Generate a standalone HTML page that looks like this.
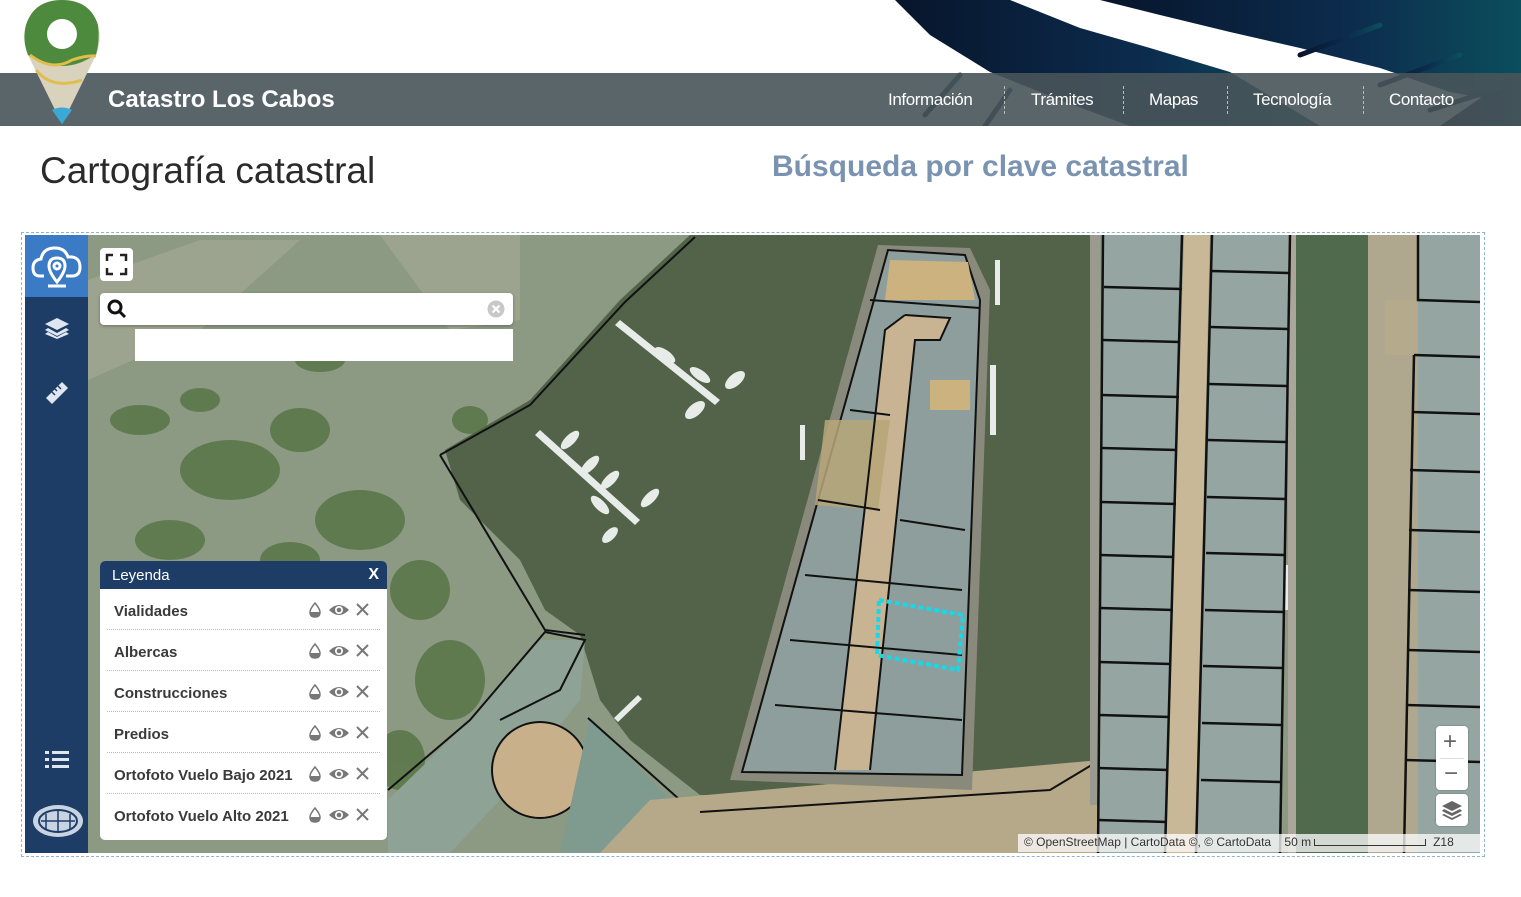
<!DOCTYPE html>
<html><head><meta charset="utf-8"><style>
*{margin:0;padding:0;box-sizing:border-box}
body{width:1521px;height:897px;background:#fff;font-family:"Liberation Sans",sans-serif;position:relative;overflow:hidden}
.abs{position:absolute}
.bar{left:0;top:73px;width:1521px;height:53px}
.brand{left:108px;top:86px;color:#fff;font-weight:bold;font-size:24px}
.nav{top:90px;color:#fff;font-size:17px;letter-spacing:-0.4px}
.sep{top:86px;height:28px;border-left:1px dashed #bbb}
h1{position:absolute;left:40px;top:150px;font-weight:normal;font-size:37px;color:#2a2a2a}
.h2{left:772px;top:150px;font-size:30px;font-weight:bold;color:#7a93b0}
.frame{left:21px;top:232px;width:1464px;height:625px;border:1px dashed #8fb4d0}
.side{left:25px;top:235px;width:63px;height:618px;background:#1e3d66}
.sidetop{left:25px;top:235px;width:63px;height:62px;background:#3b7bc6}
.btn{background:#fff;border-radius:4px}
.leg{left:100px;top:561px;width:287px;height:279px;background:#fff;border-radius:5px;overflow:hidden}
.leghd{height:28px;background:#1e3d66;color:#fff;font-size:15px;padding:6px 12px;position:relative}
.row{height:41px;margin:0 7px;border-bottom:1px dotted #bbb;position:relative;font-size:15px;font-weight:bold;color:#3a3a3a;padding:14px 7px 0}
.row:last-child{border-bottom:none}
.ic{position:absolute;top:12px;right:6px;width:66px;height:18px}
</style></head><body>
<svg class="abs" style="left:860px;top:0" width="661" height="126" viewBox="860 0 661 126">
<defs><linearGradient id="g" x1="0" x2="1"><stop offset="0" stop-color="#07152b"/><stop offset=".6" stop-color="#0c2c4e"/><stop offset="1" stop-color="#0b4e5c"/></linearGradient></defs>
<g fill="url(#g)">
<path d="M895 0 L1010 0 L1080 28 L1150 48 L1230 72 L1320 126 L1130 126 L1060 100 L990 72 L930 35 Z"/>
<path d="M1100 0 L1521 0 L1521 105 L1450 92 L1380 68 L1300 48 L1230 32 L1160 15 Z"/>
<path d="M1440 126 L1521 70 L1521 126Z"/>
</g>
<g stroke="url(#g)" stroke-width="5" stroke-linecap="round">
<line x1="960" y1="75" x2="925" y2="115"/><line x1="1010" y1="90" x2="985" y2="126"/><line x1="1380" y1="85" x2="1460" y2="55"/><line x1="1300" y1="55" x2="1380" y2="25"/><line x1="1430" y1="110" x2="1500" y2="88"/>
</g></svg>
<div class="abs bar" style="background:rgba(72,84,90,0.9)"></div>
<svg class="abs" style="left:22px;top:0" width="80" height="126" viewBox="0 0 80 126">
<path d="M40 124 L6 55 Q0 40 4 25 Q12 0 40 0 Q68 0 76 25 Q80 40 74 55 Z" fill="#d9d3bd"/>
<path d="M4 25 Q12 0 40 0 Q68 0 76 25 Q78 40 74 55 L60 62 Q40 70 20 62 L6 55 Q0 40 4 25Z" fill="#4e8a3e"/>
<path d="M8 55 Q30 72 50 60 Q65 55 74 56" stroke="#e1bd4a" stroke-width="3" fill="none"/>
<path d="M14 70 Q30 90 60 80" stroke="#e1bd4a" stroke-width="3" fill="none"/>
<path d="M30 110 L40 124 L50 110 Q40 105 30 110Z" fill="#3aa9d6"/>
<circle cx="40" cy="34" r="15" fill="#fff"/>
</svg>
<div class="abs brand">Catastro Los Cabos</div>
<div class="abs nav" style="left:888px">Información</div>
<div class="abs sep" style="left:1004px"></div>
<div class="abs nav" style="left:1031px">Trámites</div>
<div class="abs sep" style="left:1123px"></div>
<div class="abs nav" style="left:1149px">Mapas</div>
<div class="abs sep" style="left:1227px"></div>
<div class="abs nav" style="left:1253px">Tecnología</div>
<div class="abs sep" style="left:1363px"></div>
<div class="abs nav" style="left:1389px">Contacto</div>
<h1>Cartografía catastral</h1>
<div class="abs h2">Búsqueda por clave catastral</div>
<div class="abs frame"></div>
<svg class="abs" style="left:88px;top:235px" width="1392" height="618" viewBox="88 235 1392 618">
<rect x="88" y="235" width="1392" height="618" fill="#8c9a84"/>
<g fill="#a6ab96" opacity=".6"><path d="M88 280 L200 240 L300 240 L200 330 L88 380Z"/><path d="M380 235 L520 235 L520 320 L450 330Z"/></g>
<g fill="#52703f" opacity=".75">
<ellipse cx="230" cy="470" rx="50" ry="30"/><ellipse cx="300" cy="430" rx="30" ry="22"/><ellipse cx="360" cy="520" rx="45" ry="30"/><ellipse cx="170" cy="540" rx="35" ry="20"/><ellipse cx="290" cy="560" rx="30" ry="18"/><ellipse cx="420" cy="590" rx="30" ry="30"/><ellipse cx="450" cy="680" rx="35" ry="40"/><ellipse cx="400" cy="760" rx="25" ry="30"/><ellipse cx="140" cy="420" rx="30" ry="15"/><ellipse cx="320" cy="360" rx="25" ry="12"/><ellipse cx="470" cy="420" rx="18" ry="14"/><ellipse cx="200" cy="400" rx="20" ry="12"/>
</g>
<path d="M445 450 L530 400 L620 300 L690 235 L1095 235 L1095 760 L1040 800 L960 800 L900 790 L780 795 L700 795 L630 740 L600 700 L580 635 L545 610 L520 560 L460 500Z" fill="#526349"/>
<path d="M440 455 L530 405 L625 302 L695 237" stroke="#111" stroke-width="2" fill="none"/>
<path d="M440 455 L545 630 L585 635" stroke="#111" stroke-width="2" fill="none"/>
<path d="M540 640 L585 640 L580 700 L540 750 L500 800 L450 853 L388 853 L388 800 L470 720Z" fill="#8ea396"/>
<path d="M388 790 L470 720 L545 632 L585 640 L560 690 L540 700 L500 720" stroke="#111" stroke-width="2" fill="none"/>
<circle cx="540" cy="770" r="48" fill="#c7b08a" stroke="#111" stroke-width="2"/>
<path d="M590 717 L670 800 L700 853 L560 853 Z" fill="#7f9a8e"/>
<path d="M588 718 L680 800 L720 810" stroke="#111" stroke-width="2" fill="none"/>
<path d="M650 800 L1100 760 L1180 800 L1180 853 L600 853Z" fill="#b6a98a"/>
<path d="M700 812 L1050 790 L1100 760" stroke="#111" stroke-width="2" fill="none"/>
<path d="M878 245 L970 248 L990 290 L972 790 L730 780 Z" fill="#8a8a7c"/>
<path d="M888 250 L965 255 L980 300 L962 775 L742 772 Z" fill="#8e9e9c" stroke="#111" stroke-width="2"/>
<path d="M890 260 L968 262 L975 300 L885 300 Z" fill="#cbb27f"/>
<path d="M905 315 L950 318 L940 340 L915 340 L870 770 L835 770 L885 330Z" fill="#c8b493"/>
<path d="M825 420 L890 420 L878 510 L815 505Z" fill="#b7a679" opacity=".85"/>
<rect x="930" y="380" width="40" height="30" fill="#cbb27f"/>
<g stroke="#111" stroke-width="2" fill="none">
<path d="M870 300 L980 308"/><path d="M850 410 L890 415"/><path d="M818 500 L880 510"/><path d="M805 575 L962 590"/><path d="M790 640 L962 655"/><path d="M775 705 L962 720"/><path d="M900 520 L965 530"/>
<path d="M905 315 L950 318 L940 340 L915 340 L870 770"/><path d="M905 315 L885 330 L835 770"/>
</g>
<path d="M879 600 L963 615 L958 670 L877 655Z" fill="none" stroke="#18d8e8" stroke-width="4" stroke-dasharray="5,3"/>
<g fill="#e8ece8">
<path d="M620 320 L720 400 L715 405 L615 325Z"/><path d="M540 430 L640 520 L635 525 L535 435Z"/>
<ellipse cx="665" cy="355" rx="12" ry="5" transform="rotate(35 665 355)"/><ellipse cx="700" cy="375" rx="12" ry="5" transform="rotate(35 700 375)"/><ellipse cx="735" cy="380" rx="12" ry="6" transform="rotate(-40 735 380)"/><ellipse cx="695" cy="410" rx="12" ry="6" transform="rotate(-40 695 410)"/>
<ellipse cx="570" cy="440" rx="12" ry="5" transform="rotate(-45 570 440)"/><ellipse cx="590" cy="465" rx="12" ry="5" transform="rotate(-45 590 465)"/><ellipse cx="610" cy="480" rx="12" ry="5" transform="rotate(-45 610 480)"/><ellipse cx="650" cy="498" rx="12" ry="5" transform="rotate(-45 650 498)"/><ellipse cx="600" cy="505" rx="12" ry="5" transform="rotate(45 600 505)"/><ellipse cx="610" cy="535" rx="10" ry="5" transform="rotate(-45 610 535)"/>
<rect x="995" y="260" width="5" height="45"/><rect x="990" y="365" width="6" height="70"/><rect x="800" y="425" width="5" height="35"/><path d="M614 718 L638 695 L642 699 L618 722Z"/><rect x="1285" y="565" width="6" height="45"/>
</g>
<rect x="1090" y="235" width="10" height="570" fill="#9a9a90"/>
<path d="M1103 235 L1182 235 L1165 853 L1098 853Z" fill="#95a6a2"/>
<path d="M1184 235 L1210 235 L1195 853 L1165 853Z" fill="#c9b898"/>
<path d="M1212 235 L1290 235 L1280 853 L1196 853Z" fill="#95a6a2"/>
<rect x="1288" y="235" width="8" height="618" fill="#aaa69a"/>
<rect x="1296" y="235" width="72" height="618" fill="#4f6a4c"/>
<rect x="1368" y="235" width="50" height="618" fill="#b0a88e"/>
<rect x="1418" y="235" width="62" height="618" fill="#95a6a2"/>
<rect x="1385" y="300" width="33" height="55" fill="#b5ab8c"/>
<g stroke="#111" stroke-width="2.5" fill="none">
<path d="M1103 235 L1098 853"/><path d="M1182 235 L1165 853"/><path d="M1212 235 L1196 853"/><path d="M1290 235 L1280 853"/><path d="M1418 235 L1418 300 L1480 302"/><path d="M1414 355 L1404 853"/>
<path d="M1104 287 L1182 289"/><path d="M1103 340 L1180 342"/><path d="M1102 395 L1179 397"/><path d="M1102 448 L1177 450"/><path d="M1101 502 L1176 504"/><path d="M1100 555 L1174 557"/><path d="M1100 608 L1173 610"/><path d="M1099 662 L1171 664"/><path d="M1099 715 L1170 717"/><path d="M1098 768 L1168 770"/><path d="M1098 820 L1167 822"/>
<path d="M1211 271 L1289 273"/><path d="M1210 327 L1288 329"/><path d="M1209 384 L1287 386"/><path d="M1208 440 L1286 442"/><path d="M1207 497 L1285 499"/><path d="M1206 553 L1284 555"/><path d="M1205 610 L1283 612"/><path d="M1203 666 L1282 668"/><path d="M1202 723 L1281 725"/><path d="M1201 780 L1280 782"/>
<path d="M1414 355 L1480 357"/><path d="M1412 412 L1480 414"/><path d="M1410 470 L1480 472"/><path d="M1409 530 L1480 532"/><path d="M1408 590 L1480 592"/><path d="M1407 650 L1480 652"/><path d="M1406 705 L1480 707"/><path d="M1405 760 L1480 762"/>
</g>
</svg>
<div class="abs side"></div>
<div class="abs sidetop"></div>
<svg class="abs" style="left:30px;top:240px" width="54" height="52" viewBox="0 0 54 52" fill="none" stroke="#fff" stroke-width="3">
<path d="M14 36 H10 Q3 36 3 28 Q3 20 11 19 Q13 8 25 8 Q35 8 38 17 Q50 16 50 27 Q50 36 42 36 H36"/>
<path d="M27 42 Q19 32 19 26 Q19 18 27 18 Q35 18 35 26 Q35 32 27 42Z"/><circle cx="27" cy="26" r="3"/><path d="M18 46 H36"/></svg>
<svg class="abs" style="left:45px;top:318px" width="24" height="22" viewBox="0 0 24 22" fill="#dfe6f0"><path d="M12 0 L24 6 L12 12 L0 6Z"/><path d="M3 10 L12 15 L21 10 L24 12 L12 18 L0 12Z"/><path d="M3 15 L12 20 L21 15 L24 17 L12 22 L0 17Z" transform="translate(0,-1)"/></svg>
<svg class="abs" style="left:44px;top:380px" width="26" height="26" viewBox="0 0 26 26"><path d="M2 18 L18 2 L24 8 L8 24Z" fill="#dfe6f0"/><g stroke="#1e3d66" stroke-width="1.5"><line x1="8" y1="12" x2="11" y2="15"/><line x1="11" y1="9" x2="13" y2="11"/><line x1="14" y1="6" x2="17" y2="9"/></g></svg>
<svg class="abs" style="left:45px;top:750px" width="24" height="20" viewBox="0 0 24 20" fill="#dfe6f0"><rect x="0" y="1" width="4" height="3"/><rect x="7" y="1" width="17" height="3"/><rect x="0" y="8" width="4" height="3"/><rect x="7" y="8" width="17" height="3"/><rect x="0" y="15" width="4" height="3"/><rect x="7" y="15" width="17" height="3"/></svg>
<svg class="abs" style="left:32px;top:804px" width="52" height="34" viewBox="0 0 52 34"><ellipse cx="26" cy="17" rx="25" ry="16" fill="#c9d4e2"/><ellipse cx="26" cy="17" rx="19" ry="11" fill="none" stroke="#1e3d66" stroke-width="2"/><path d="M26 5 V29 M14 10 V25 M38 10 V25 M9 17 H43" stroke="#1e3d66" stroke-width="1.5"/></svg>
<div class="abs btn" style="left:100px;top:248px;width:33px;height:33px"></div>
<svg class="abs" style="left:105px;top:253px" width="23" height="23" viewBox="0 0 23 23" fill="none" stroke="#222" stroke-width="2.5"><path d="M2 8 V2 H8 M15 2 H21 V8 M21 15 V21 H15 M8 21 H2 V15"/></svg>
<div class="abs" style="left:100px;top:293px;width:413px;height:32px;background:#fff;border-radius:4px;box-shadow:0 1px 3px rgba(0,0,0,.3)"></div>
<svg class="abs" style="left:106px;top:298px" width="22" height="22" viewBox="0 0 22 22" fill="none" stroke="#111" stroke-width="3"><circle cx="9" cy="9" r="6"/><path d="M13 13 L19 19"/></svg>
<svg class="abs" style="left:487px;top:300px" width="18" height="18" viewBox="0 0 18 18"><circle cx="9" cy="9" r="8.5" fill="#c8c8c8"/><path d="M5.5 5.5 L12.5 12.5 M12.5 5.5 L5.5 12.5" stroke="#fff" stroke-width="2.2"/></svg>
<div class="abs" style="left:135px;top:329px;width:378px;height:32px;background:#fff"></div>
<div class="abs leg">
<div class="leghd">Leyenda<span style="position:absolute;right:8px;top:5px;font-weight:bold;font-size:16px">X</span></div>
<div class="row">Vialidades<svg class="ic" viewBox="0 0 66 18"><use href="#icons"/></svg></div>
<div class="row">Albercas<svg class="ic" viewBox="0 0 66 18"><use href="#icons"/></svg></div>
<div class="row">Construcciones<svg class="ic" viewBox="0 0 66 18"><use href="#icons"/></svg></div>
<div class="row">Predios<svg class="ic" viewBox="0 0 66 18"><use href="#icons"/></svg></div>
<div class="row">Ortofoto Vuelo Bajo 2021<svg class="ic" viewBox="0 0 66 18"><use href="#icons"/></svg></div>
<div class="row">Ortofoto Vuelo Alto 2021<svg class="ic" viewBox="0 0 66 18"><use href="#icons"/></svg></div>
</div>
<svg width="0" height="0" style="position:absolute"><defs><g id="icons">
<path d="M7 2 Q2 8 2 11 Q2 16 7 16 Q12 16 12 11 Q12 8 7 2Z" fill="none" stroke="#777" stroke-width="1.5"/><path d="M2 11 H12 Q12 16 7 16 Q2 16 2 11Z" fill="#777"/>
<path d="M21 9 Q31 -1 41 9 Q31 19 21 9Z" fill="#777"/><circle cx="31" cy="9" r="4" fill="#fff"/><circle cx="31" cy="9" r="2.3" fill="#777"/>
<path d="M49 3 L60 14 M60 3 L49 14" stroke="#777" stroke-width="2"/>
</g></defs></svg>
<div class="abs btn" style="left:1436px;top:726px;width:32px;height:64px;box-shadow:0 0 2px rgba(0,0,0,.3)"></div>
<div class="abs" style="left:1440px;top:758px;width:24px;border-top:1px solid #ddd"></div>
<div class="abs" style="left:1443px;top:728px;font-size:24px;color:#666">+</div>
<div class="abs" style="left:1444px;top:760px;font-size:24px;color:#666">−</div>
<div class="abs btn" style="left:1436px;top:794px;width:32px;height:32px;box-shadow:0 0 2px rgba(0,0,0,.3)"></div>
<svg class="abs" style="left:1441px;top:799px" width="22" height="22" viewBox="0 0 22 22" fill="#666"><path d="M11 2 L21 7 L11 12 L1 7Z"/><path d="M3 10 L11 14 L19 10 L21 12 L11 17 L1 12Z"/><path d="M3 15 L11 19 L19 15 L21 16 L11 21 L1 16Z"/></svg>
<div class="abs" style="left:1018px;top:834px;width:462px;height:18px;background:rgba(255,255,255,.75);font-size:12px;color:#333;padding:1px 6px;white-space:nowrap">© OpenStreetMap | CartoData ©, © CartoData &nbsp;&nbsp; 50 m <span style="display:inline-block;width:112px;height:7px;border:1px solid #333;border-top:none"></span> &nbsp;Z18</div>
</body></html>
